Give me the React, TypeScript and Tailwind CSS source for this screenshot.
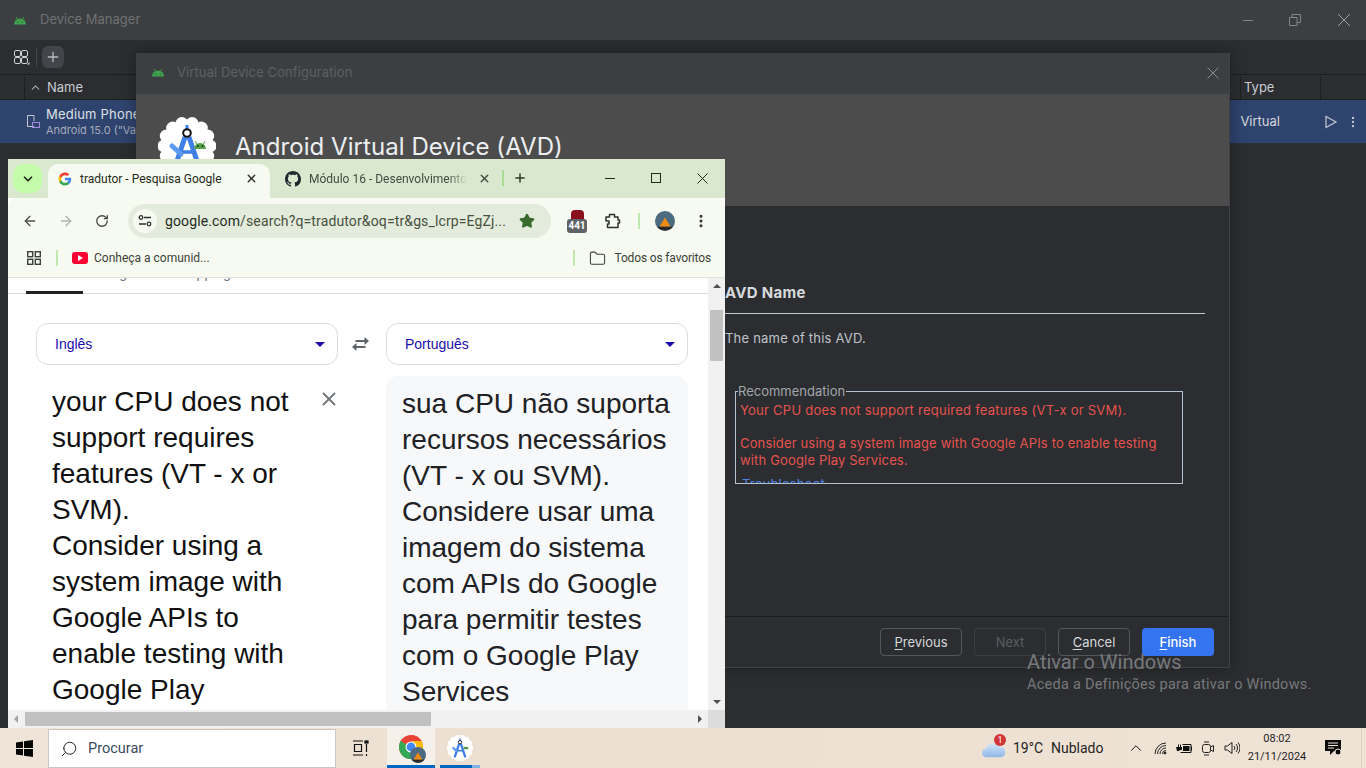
import { ArrowLeft, ArrowRight, ChevronDown, ChevronUp, EllipsisVertical, Folder, Plus, RotateCw, Search, Star, X } from "lucide-react";

function AndroidHead() {
  return (
    <svg width="14" height="9" viewBox="0 0 14 9" fill="#3fa34d">
      <path d="M1 8.500a6 6 0 0 1 12 0z" />
      <path d="M3 1l1.500 2.500M11 1L9.500 3.500" stroke="#3fa34d" strokeWidth="1" />
      <circle cx="4.700" cy="6" r=".6" fill="#2b2d30" />
      <circle cx="9.300" cy="6" r=".6" fill="#2b2d30" />
    </svg>
  );
}

function StudioLogo({ size }: { size: number }) {
  const bumps = Array.from({ length: 14 }, (_, i) => (i * Math.PI * 2) / 14);
  return (
    <svg width={size} height={size} viewBox="0 0 58 58">
      <circle cx="29" cy="29" r="25" fill="#fff" />
      {bumps.map((a) => (
        <circle key={a} cx={29 + 23 * Math.cos(a)} cy={29 + 23 * Math.sin(a)} r="6.500" fill="#fff" />
      ))}
      <path d="M29 8v8" stroke="#3a7ee8" strokeWidth="3" />
      <path d="M27 20L17 50M31 20l10 30" stroke="#3f7fe6" strokeWidth="5" />
      <path d="M21 35h16" stroke="#3f7fe6" strokeWidth="3.500" />
      <path d="M14 29l9 8" stroke="#5b9af0" strokeWidth="5" strokeLinecap="round" />
      <circle cx="29" cy="16" r="3.800" fill="#fff" stroke="#111" strokeWidth="2" />
      <path d="M36 35a6 6 0 0 1 12 0z" fill="#55a04a" transform="translate(0 -3)" />
      <path d="M37 24l2 4M47 24l-2 4" stroke="#55a04a" />
      <circle cx="40" cy="29" r=".9" fill="#1d3d18" />
      <circle cx="44.500" cy="29" r=".9" fill="#1d3d18" />
    </svg>
  );
}

function GoogleG() {
  return (
    <svg width="14" height="14" viewBox="0 0 24 24">
      <path fill="#4285F4" d="M22.560 12.250c0-.78-.07-1.530-.2-2.250H12v4.260h5.920c-.26 1.370-1.040 2.530-2.210 3.310v2.770h3.570c2.080-1.920 3.280-4.740 3.280-8.090z" />
      <path fill="#34A853" d="M12 23c2.970 0 5.460-.98 7.280-2.660l-3.570-2.770c-.98.66-2.230 1.060-3.710 1.060-2.860 0-5.290-1.930-6.160-4.530H2.180v2.840C3.990 20.530 7.700 23 12 23z" />
      <path fill="#FBBC05" d="M5.840 14.090c-.22-.66-.35-1.360-.35-2.090s.13-1.430.35-2.090V7.070H2.180C1.430 8.550 1 10.220 1 12s.43 3.450 1.180 4.930l3.660-2.840z" />
      <path fill="#EA4335" d="M12 5.380c1.620 0 3.060.56 4.210 1.640l3.150-3.150C17.450 2.090 14.970 1 12 1 7.700 1 3.990 3.470 2.180 7.070l3.660 2.840c.87-2.600 3.300-4.530 6.160-4.530z" />
    </svg>
  );
}

function GithubMark() {
  return (
    <svg width="16" height="16" viewBox="0 0 16 16" fill="#24292f">
      <path d="M8 0C3.580 0 0 3.580 0 8c0 3.540 2.290 6.530 5.470 7.590.4.070.55-.17.55-.38 0-.19-.01-.82-.01-1.490-2.010.37-2.530-.49-2.690-.94-.09-.23-.48-.94-.82-1.130-.28-.15-.68-.52-.01-.53.63-.01 1.080.58 1.230.82.720 1.210 1.870.87 2.330.66.070-.52.280-.87.510-1.070-1.780-.2-3.640-.89-3.640-3.950 0-.87.310-1.590.820-2.150-.08-.2-.36-1.020.08-2.120 0 0 .67-.21 2.200.82.640-.18 1.320-.27 2-.27s1.360.09 2 .27c1.530-1.040 2.200-.82 2.200-.82.440 1.100.16 1.920.08 2.120.51.56.82 1.270.82 2.150 0 3.070-1.870 3.750-3.650 3.950.29.25.54.73.54 1.480 0 1.070-.01 1.930-.01 2.200 0 .21.150.46.550.38A8.010 8.010 0 0 0 16 8c0-4.420-3.580-8-8-8z" />
    </svg>
  );
}

function Avatar({ size }: { size: number }) {
  return (
    <svg width={size} height={size} viewBox="0 0 20 20">
      <circle cx="10" cy="10" r="10" fill="#4d6b80" />
      <path d="M2 15.500h16A10 10 0 0 1 2 15.500z" fill="#2c2a24" />
      <path d="M10 6.500l5.500 9h-11z" fill="#f08a12" />
    </svg>
  );
}

function ChromeLogo() {
  return (
    <svg width="24" height="24" viewBox="0 0 24 24">
      <circle cx="12" cy="12" r="12" fill="#ea4335" />
      <path d="M12 12L1.600 18A12 12 0 0 0 13 24z" fill="#34a853" />
      <path d="M12 12l10.400-6A12 12 0 0 0 12 0z" fill="#ea4335" />
      <path d="M12 6h10.400A12 12 0 0 1 12 24l5.200-9z" fill="#fbbc05" />
      <path d="M1.600 6A12 12 0 0 0 6.800 22.800L12 12z" fill="#34a853" />
      <circle cx="12" cy="12" r="5.500" fill="#fff" />
      <circle cx="12" cy="12" r="4.400" fill="#4285f4" />
    </svg>
  );
}

function DeviceManager() {
  return (
    <div className="h-[728px] flex flex-col bg-[#2b2d30] font-['Inter',sans-serif]">
      <div className="h-10 shrink-0 bg-[#3c3f41] flex items-center pl-[13px] pr-[15px]">
        <AndroidHead />
        <span className="ml-[13px] text-[13px] text-[#6f7174]">Device Manager</span>
        <div className="ml-auto flex items-center gap-[36px]">
          <span className="block w-[10px] h-px bg-[#83868a]" />
          <svg width="12" height="12" viewBox="0 0 12 12" fill="none" stroke="#83868a"><path d="M.5 3.500h7.500v8H.5zM3 3.500V.5h8.500v8H8" /></svg>
          <svg width="14" height="14" viewBox="0 0 14 14" stroke="#a0a2a5"><path d="M1 1l12 12M13 1L1 13" /></svg>
        </div>
      </div>
      <div className="h-[35px] shrink-0 flex items-center pl-[14px] border-b border-[#1e1f22]">
        <svg width="16" height="16" viewBox="0 0 16 16" fill="none" stroke="#cfd1d4"><rect x=".5" y="1.500" width="6" height="6" rx="1.500" /><rect x="7.500" y="1.500" width="6" height="6" rx="1.500" /><rect x=".5" y="8.500" width="6" height="6" rx="1.500" /><rect x="7.500" y="8.500" width="6" height="6" rx="1.500" /><path d="M15.500 13v2.500H13z" fill="#cfd1d4" stroke="none" /></svg>
        <span className="ml-[6px] w-px h-5 bg-[#43454a]" />
        <span className="ml-[5px] w-[22px] h-[22px] rounded-md bg-[#43454a] flex items-center justify-center"><Plus size={16} color="#b8babd" /></span>
      </div>
      <div className="h-[25px] shrink-0 pt-px flex items-center border-b border-[#1e1f22] text-[13px] text-[#c8ccd2]">
        <span className="ml-[24px] w-px h-[22px] bg-[#1e1f22]" />
        <ChevronUp className="ml-[4px]" size={13} color="#a8abaf" />
        <span className="ml-[5px]">Name</span>
        <span className="ml-auto w-px h-[22px] bg-[#1e1f22]" />
        <span className="ml-[3px] w-[76px]">Type</span>
        <span className="w-px h-[22px] bg-[#1e1f22]" />
        <span className="w-[45px]" />
      </div>
      <div className="h-[43px] shrink-0 bg-[#2e436e] flex items-center pl-[27px] pr-[6px]">
        <svg width="13" height="14" viewBox="0 0 13 14" fill="none"><path d="M7 11.500H.5V.5h6.500V6" stroke="#c3c8d1" /><rect x="5.500" y="7.500" width="7" height="5" stroke="#a58be0" /></svg>
        <div className="ml-[6px] leading-none">
          <div className="text-[13px] text-[#dfe1e5] tracking-[.2px]">Medium Phone</div>
          <div className="mt-[4px] text-[11px] text-[#a3abbb]">Android 15.0 ("Va</div>
        </div>
        <span className="ml-auto mr-[44px] text-[13px] text-[#d5d8dd]">Virtual</span>
        <svg className="mr-[8px]" width="14" height="14" viewBox="0 0 14 14" fill="none" stroke="#c3c8d1" strokeWidth="1.200"><path d="M2 1.500v11l10-5.500z" /></svg>
        <EllipsisVertical size={14} color="#c3c8d1" />
      </div>
    </div>
  );
}

function DialogButton({ first, rest, style }: { first: string; rest: string; style: string }) {
  return (
    <button className={`w-[72px] h-7 rounded-[4px] text-[13px] leading-none ${style}`}>
      <span className="underline underline-offset-2">{first}</span>
      {rest}
    </button>
  );
}

function AvdDialog() {
  return (
    <div className="absolute left-[136px] top-[53px] w-[1094px] h-[615px] flex flex-col bg-[#2b2d30] border-r border-b border-[#3f4144] shadow-[0_0_14px_rgba(0,0,0,.35)] font-['Inter',sans-serif]">
      <div className="h-[41px] shrink-0 bg-[#3c3f41] flex items-center pb-[2px] pl-[15px] pr-[10px]">
        <AndroidHead />
        <span className="ml-[12px] text-[13px] tracking-[.1px] text-[#5d6063]">Virtual Device Configuration</span>
        <svg className="ml-auto" width="12" height="12" viewBox="0 0 12 12" stroke="#8a8c8f"><path d="M.5.5l11 11M11.500.5l-11 11" /></svg>
      </div>
      <div className="h-[112px] shrink-0 bg-[#4c4c4c] flex items-start pl-[22px] pt-[23px]">
        <StudioLogo size={58} />
        <h1 className="ml-[19px] mt-[15px] text-[24px] leading-[30px] text-[#eceff2] tracking-[.05px]">Android Virtual Device (AVD)</h1>
      </div>
      <div className="flex-1 pl-[589px] pr-[24px] pt-[78px]">
        <div className="pb-[11px] border-b border-[#c5c8cc] text-[15px] leading-[18px] font-bold tracking-[.3px] text-[#d7dade]">AVD Name</div>
        <p className="mt-[16px] text-[13px] leading-[16px] tracking-[.22px] text-[#bfc4cb]">The name of this AVD.</p>
        <fieldset className="mt-[38px] ml-[10px] mr-[22px] h-[100px] border border-[#b7c2d1]">
          <legend className="ml-[2px] pr-px text-[13px] leading-[14px] text-[#a2a6ab]">Recommendation</legend>
          <div className="h-[85px] pl-[4px] overflow-hidden text-[13px] leading-[17px] text-[#e5534f] tracking-[.16px]">
            <p className="mt-[4px] tracking-[.25px]">Your CPU does not support required features (VT-x or SVM).</p>
            <p className="mt-[16px]">Consider using a system image with Google APIs to enable testing<br />with Google Play Services.</p>
            <p className="mt-[7px] ml-[2px] text-[#4f86e6]">Troubleshoot</p>
          </div>
        </fieldset>
      </div>
      <div className="h-[51px] shrink-0 border-t border-[#1e1f22] flex items-start justify-end gap-3 pt-[11px] pr-[15px]">
        <DialogButton first="P" rest="revious" style="w-[82px] border border-[#54565a] text-[#d6d9dd]" />
        <DialogButton first="" rest="Next" style="border border-[#3d3f43] text-[#5a5d62]" />
        <DialogButton first="C" rest="ancel" style="border border-[#54565a] text-[#d6d9dd]" />
        <DialogButton first="F" rest="inish" style="bg-[#3574f0] text-white font-medium" />
      </div>
    </div>
  );
}

function Browser() {
  return (
    <div className="absolute left-2 top-[159px] w-[717px] h-[569px] flex flex-col bg-white font-['Roboto',sans-serif] overflow-hidden">
      <div className="h-[39px] shrink-0 bg-[#d9e8cf] flex items-end pl-[5px] text-[12px]">
        <div className="mb-[5px] w-[29px] h-[29px] rounded-[10px] bg-[#c4fbab] flex items-center justify-center"><ChevronDown size={14} strokeWidth={3} color="#1d2a18" /></div>
        <div className="ml-[6px] w-[222px] h-[34px] rounded-t-[10px] bg-[#f7faf1] flex items-center pb-[5px] pl-[10px] pr-[12px] text-[#1f2a1c]">
          <GoogleG />
          <span className="ml-[8px]">tradutor - Pesquisa Google</span>
          <X className="ml-auto" size={13} strokeWidth={2.500} color="#2b2f2a" />
        </div>
        <div className="w-[232px] h-[34px] flex items-center pb-[5px] pl-[15px] pr-[11px] text-[#454b43]">
          <GithubMark />
          <span className="ml-[8px] w-[158px] whitespace-nowrap overflow-hidden [mask-image:linear-gradient(to_right,black_88%,transparent)]">Módulo 16 - Desenvolvimento Web</span>
          <X className="ml-auto" size={13} strokeWidth={2.500} color="#454b43" />
        </div>
        <span className="mb-[12px] w-[2px] h-4 bg-[#a9dc94]" />
        <Plus className="ml-[9px] mb-[13px]" size={14} strokeWidth={2.500} color="#2b3a28" />
        <div className="ml-auto mb-[12px] h-4 flex items-center text-[#1f2a1c]">
          <span className="w-[46px] flex justify-center"><span className="w-[10px] h-px bg-[#1f2a1c]" /></span>
          <span className="w-[46px] flex justify-center"><span className="w-[10px] h-[10px] border border-[#1f2a1c]" /></span>
          <span className="w-[46px] flex justify-center">
            <svg width="11" height="11" viewBox="0 0 11 11" stroke="#1f2a1c"><path d="M.5.5l10 10M10.500.5l-10 10" /></svg>
          </span>
        </div>
      </div>
      <div className="h-[46px] shrink-0 bg-[#f7faf1] rounded-t-[8px] flex items-center pl-[14px] pr-[14px]">
        <ArrowLeft size={16} strokeWidth={2} color="#4a5247" />
        <ArrowRight className="ml-5" size={16} strokeWidth={2} color="#b1b5ad" />
        <RotateCw className="ml-[21px]" size={14} strokeWidth={2.200} color="#3f473c" />
        <div className="ml-[19px] w-[423px] h-[34px] rounded-full bg-[#e3ecdc] flex items-center pl-[5px] pr-[16px]">
          <span className="w-6 h-6 rounded-full bg-[#f7faf1] flex items-center justify-center">
            <svg width="14" height="12" viewBox="0 0 14 12" fill="none" stroke="#2c3329" strokeWidth="1.300"><circle cx="3" cy="2.500" r="1.800" /><path d="M6 2.500h7M1 9h7" /><circle cx="11" cy="9" r="1.800" /></svg>
          </span>
          <span className="ml-[8px] text-[14px] text-[#1f2a1c] whitespace-nowrap tracking-[.13px]">google.com<span className="text-[#48503f]">/search?q=tradutor&amp;oq=tr&amp;gs_lcrp=EgZj...</span></span>
          <Star className="ml-auto" size={16} fill="#386a2e" color="#386a2e" />
        </div>
        <div className="ml-[16px] w-5 h-[23px] relative flex flex-col items-center">
          <span className="w-[13px] h-[9px] rounded-t-[4px] bg-[#8b0f1a]" />
          <span className="absolute top-[9px] w-5 h-[14px] rounded-[3px] bg-[#5f6368] text-white text-[10px] font-bold leading-[14px] text-center">441</span>
        </div>
        <svg className="ml-[18px]" width="16" height="16" viewBox="0 0 16 16" fill="none" stroke="#2c3329" strokeWidth="1.500" strokeLinejoin="round"><path d="M1 4h3.500V1.500h5V4h3.500v3h1.500v3H13v4.500H2.500V11H4V8H1z" /></svg>
        <span className="ml-[17px] w-[2px] h-4 bg-[#c1e8ae]" />
        <span className="ml-[15px] flex"><Avatar size={20} /></span>
        <EllipsisVertical className="ml-[18px]" size={16} strokeWidth={2.500} color="#2c3329" />
      </div>
      <div className="h-[34px] shrink-0 bg-[#f7faf1] border-b border-[#dfe3da] flex items-center pb-[5px] pl-[19px] pr-[14px] text-[12px] text-[#3c4239]">
        <svg width="14" height="14" viewBox="0 0 14 14" fill="none" stroke="#3c4239" strokeWidth="1.400"><rect x=".7" y=".7" width="5" height="5" /><rect x="8.300" y=".7" width="5" height="5" /><rect x=".7" y="8.300" width="5" height="5" /><rect x="8.300" y="8.300" width="5" height="5" /></svg>
        <span className="ml-[15px] w-[2px] h-4 bg-[#c1e8ae]" />
        <span className="ml-[14px] w-4 h-3 rounded-[3px] bg-[#ff0033] flex items-center justify-center"><span className="border-y-[3px] border-l-[5px] border-y-transparent border-l-white" /></span>
        <span className="ml-[6px]">Conheça a comunid...</span>
        <span className="ml-auto w-[2px] h-4 bg-[#c1e8ae]" />
        <Folder className="ml-[14px]" size={17} strokeWidth={1.500} color="#3c4239" />
        <span className="ml-[8px] tracking-[-.15px]">Todos os favoritos</span>
      </div>
      <div className="flex-1 min-h-0 flex flex-col">
        <div className="flex-1 min-h-0 flex">
          <main className="flex-1 min-w-0 font-['Liberation_Sans',sans-serif] overflow-hidden">
            <div className="h-[16px] border-b border-[#dadce0] relative flex text-[14px] leading-[16px] text-[#70757a]">
              <span className="absolute left-[18px] bottom-[-1px] w-[57px] h-[3px] bg-[#202124]" />
              <span className="ml-[88px] -mt-[13px]">Imagens</span>
              <span className="ml-[22px] -mt-[13px]">Shopping</span>
            </div>
            <div className="flex pl-7 pt-[29px]">
              <div className="w-[302px] h-[42px] rounded-xl border border-[#dadce0] flex items-center pl-[18px] pr-3 text-[14px] text-[#1a0dab]">
                Inglês
                <span className="ml-auto border-x-[5px] border-t-[5px] border-x-transparent border-t-[#1a0dab]" />
              </div>
              <div className="w-[48px] h-[42px] flex items-center justify-center">
                <svg className="-ml-[3px]" width="19" height="14" viewBox="0 0 18 14" fill="#5f6368"><path d="M13 0l4.500 4L13 8V5H4V3h9zM5 6v3h9v2H5v3L.5 10z" /></svg>
              </div>
              <div className="w-[302px] h-[42px] rounded-xl border border-[#dadce0] flex items-center pl-[18px] pr-3 text-[14px] text-[#1a0dab]">
                Português
                <span className="ml-auto border-x-[5px] border-t-[5px] border-x-transparent border-t-[#1a0dab]" />
              </div>
            </div>
            <div className="flex pl-7 pt-[11px] text-[28px] leading-[36px] text-[#111]">
              <div className="w-[350px] pl-4 pt-[8px] flex items-start">
                <p className="whitespace-nowrap">your CPU does not<br />support requires<br />features (VT - x or<br />SVM).<br />Consider using a<br />system image with<br />Google APIs to<br />enable testing with<br />Google Play</p>
                <X className="ml-[29px] mt-[4px]" size={22} strokeWidth={2} color="#70757a" />
              </div>
              <div className="w-[302px] h-[360px] rounded-t-xl bg-[#f7f8fa] pl-4 pt-[10px] text-[#202124]">
                <p className="whitespace-nowrap">sua CPU não suporta<br />recursos necessários<br />(VT - x ou SVM).<br />Considere usar uma<br />imagem do sistema<br />com APIs do Google<br />para permitir testes<br />com o Google Play<br />Services</p>
              </div>
            </div>
          </main>
          <div className="w-[17px] shrink-0 bg-[#f1f1f1] flex flex-col items-center">
            <span className="mt-[6px] border-x-[4px] border-b-[4px] border-x-transparent border-b-[#505050]" />
            <span className="mt-[22px] w-[13px] h-[51px] bg-[#c1c1c1]" />
            <span className="mt-auto mb-[6px] border-x-[4px] border-t-[4px] border-x-transparent border-t-[#505050]" />
          </div>
        </div>
        <div className="h-[18px] shrink-0 bg-[#f1f1f1] flex items-center">
          <span className="ml-[6px] border-y-[4px] border-r-[4px] border-y-transparent border-r-[#a3a3a3]" />
          <span className="ml-[7px] w-[406px] h-[14px] bg-[#c1c1c1]" />
          <span className="ml-auto mr-[6px] border-y-[4px] border-l-[4px] border-y-transparent border-l-[#505050]" />
          <span className="w-[17px] h-[18px] mr-0 bg-[#dcdcdc]" />
        </div>
      </div>
    </div>
  );
}

function Taskbar() {
  return (
    <div className="h-10 flex items-center bg-[linear-gradient(90deg,#efe4d8,#ecdfd1_40%,#efe3d6)] font-['Roboto',sans-serif] text-[#1f1f1f]">
      <span className="w-12 flex justify-center">
        <svg width="17" height="17" viewBox="0 0 17 17" fill="#050505"><path d="M0 2.400L7 1.400v6.600H0zM8 1.300L17 0v8H8zM0 9h7v6.600l-7-1zM8 9h9v8l-9-1.300z" /></svg>
      </span>
      <div className="w-[288px] h-[39px] bg-white border border-[#c9c7c4] flex items-center pt-[2px] pl-[11px] text-[14.500px] text-[#3a4a5e]">
        <Search className="-scale-x-100" size={18} strokeWidth={1.300} color="#222" />
        <span className="ml-[10px]">Procurar</span>
      </div>
      <span className="w-12 flex justify-center">
        <svg width="17" height="16" viewBox="0 0 17 16" fill="none" stroke="#111" strokeWidth="1.200"><path d="M1 1h10M1 15h10M2.500 4.500h7v7h-7zM14.500 4v8M14.500 14v2" /><rect x="13" y="1" width="3" height="2" fill="#111" /></svg>
      </span>
      <div className="ml-[3px] w-12 h-full bg-[#f5f0ea] border-b-[3px] border-[#0067c0] flex items-center justify-center relative">
        <ChromeLogo />
        <span className="absolute left-[23px] top-[19px] flex"><Avatar size={16} /></span>
      </div>
      <div className="ml-[5px] w-10 h-full relative flex items-center justify-center">
        <StudioLogo size={26} />
        <span className="absolute bottom-0 inset-x-0 h-[3px] bg-[#7fb4e0]" />
        <span className="absolute bottom-0 left-0 w-8 h-[3px] bg-[#0067c0]" />
      </div>
      <div className="ml-auto flex items-center h-full text-[14px]">
        <div className="w-6 relative flex">
          <svg width="25" height="19" viewBox="0 0 25 19"><defs><linearGradient id="cloud" x1="0" y1="0" x2="0" y2="1"><stop offset="0" stopColor="#d6e6f8" /><stop offset="1" stopColor="#8fb8e8" /></linearGradient></defs><path fill="url(#cloud)" d="M5 18.500a4.500 4.500 0 0 1-.8-9A8 8 0 0 1 19 8a5.300 5.300 0 0 1 1 10.500z" /></svg>
          <span className="absolute left-[12px] -top-[5px] w-3 h-3 rounded-full bg-[#d13438] text-white text-[9px] leading-3 text-center">1</span>
        </div>
        <span className="ml-[7px] w-[38px]">19°C</span>
        <span className="w-[60px]">Nublado</span>
        <span className="ml-[13px] w-6 flex justify-center"><ChevronUp size={18} strokeWidth={1.300} color="#111" /></span>
        <span className="w-6 flex justify-center">
          <svg width="13" height="13" viewBox="0 0 13 13" fill="none" stroke="#222"><path d="M1 12A11 11 0 0 1 12 1M3.500 12A8.500 8.500 0 0 1 12 3.500M6 12a6 6 0 0 1 6-6M8.500 12A3.500 3.500 0 0 1 12 8.500" /><circle cx="11" cy="11" r="1" fill="#222" /></svg>
        </span>
        <span className="w-6 flex justify-center">
          <svg width="16" height="11" viewBox="0 0 16 11" fill="#111"><path d="M0 4h2V1.500h1V4h1V1.500h1V4h1v3H4L3 8H1z" /><path d="M6.500 1.500H15v8H4.500" fill="none" stroke="#111" /><rect x="7" y="3" width="6.500" height="5" /><rect x="15" y="3.500" width="1" height="4" /></svg>
        </span>
        <span className="w-6 flex justify-center">
          <svg width="12" height="15" viewBox="0 0 12 15" fill="none" stroke="#222"><rect x=".5" y="3.500" width="8" height="8" rx="2" /><path d="M8.500 6l3-1.500v6l-3-1.500M2 1h5M2 14h5" /></svg>
        </span>
        <span className="w-6 flex justify-center">
          <svg width="16" height="14" viewBox="0 0 16 14" fill="none" stroke="#222"><path d="M1 5v4h2.500L8 12.500v-11L3.500 5z" /><path d="M10 5a3 3 0 0 1 0 4M12 3a6 6 0 0 1 0 8M14 1.500a8.500 8.500 0 0 1 0 11" /></svg>
        </span>
        <div className="ml-[3px] w-[60px] text-center text-[11px] leading-[18px]">
          <div>08:02</div>
          <div>21/11/2024</div>
        </div>
        <span className="ml-[8px] w-9 flex justify-center">
          <svg width="17" height="16" viewBox="0 0 17 16" fill="#0b0b0b"><path d="M0 0h16v11H9l-4 4v-4H0z" /><path d="M3 3h10M3 5.500h10M3 8h6" stroke="#efe3d6" /><circle cx="13" cy="12" r="3" stroke="#efe3d6" /></svg>
        </span>
        <span className="ml-[10px] mr-1 w-px h-full bg-[#dfd3c6]" />
      </div>
    </div>
  );
}

export default function App() {
  return (
    <div className="relative w-[1366px] h-[768px] overflow-hidden bg-[#2b2d30]">
      <DeviceManager />
      <AvdDialog />
      <Browser />
      <div className="absolute left-[1027px] top-[650px] font-['Roboto',sans-serif] text-[#77797c] pointer-events-none">
        <div className="text-[20px] leading-[24px]">Ativar o Windows</div>
        <div className="text-[14.500px] leading-[20px] mt-[1px] tracking-[.25px]">Aceda a Definições para ativar o Windows.</div>
      </div>
      <Taskbar />
    </div>
  );
}
